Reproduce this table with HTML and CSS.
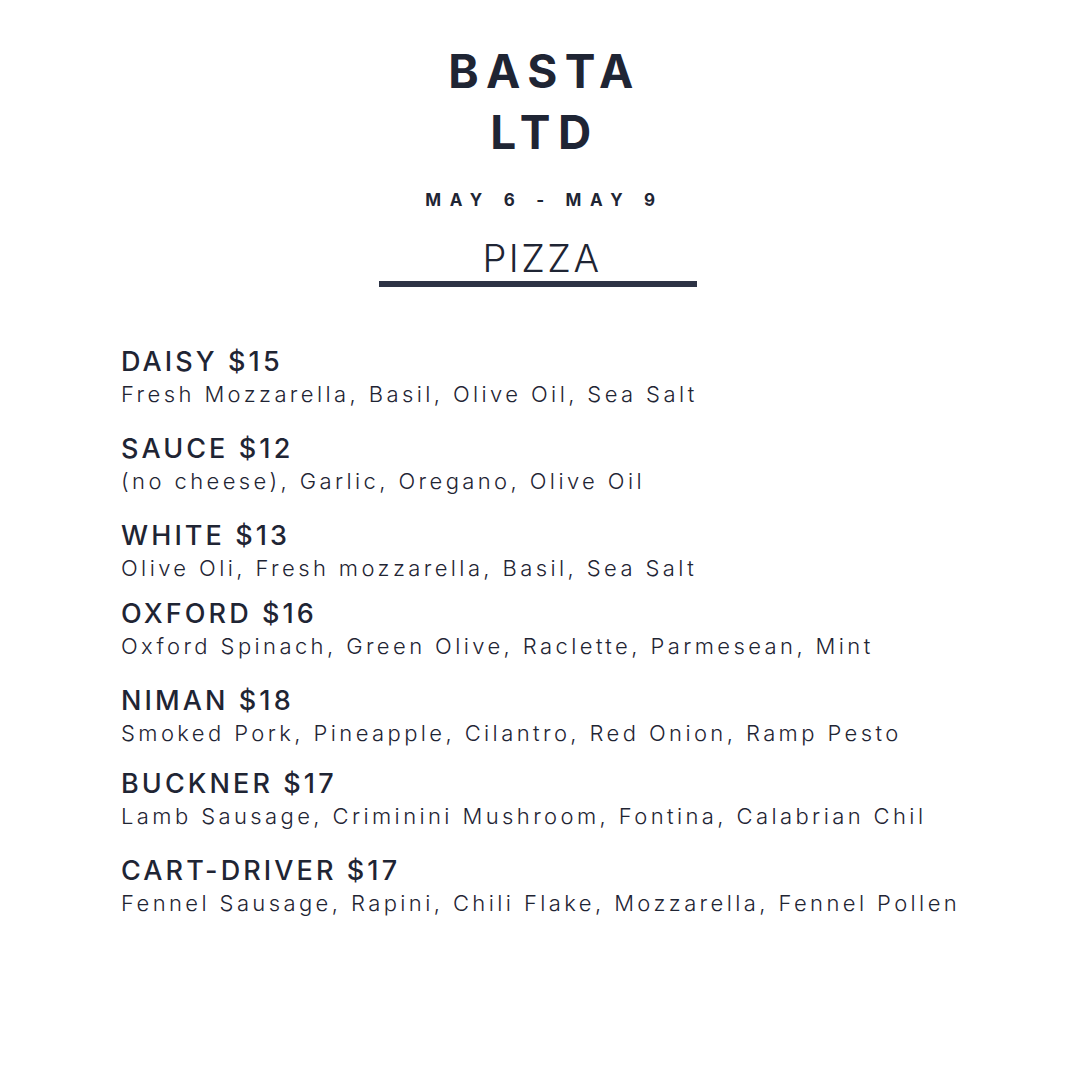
FILE: index.html
```html
<!DOCTYPE html>
<html>
<head>
<meta charset="utf-8">
<link rel="stylesheet" href="styles.css">
</head>
<body>
<div class="page">
  <header class="head">
    <h1 class="title"><span>BASTA</span><span>LTD</span></h1>
    <div class="dates">MAY 6 - MAY 9</div>
    <h2 class="section">PIZZA</h2>
    <div class="rule"></div>
  </header>
  <ul class="menu">
    <li class="item"><div class="name">DAISY $15</div><div class="desc">Fresh Mozzarella, Basil, Olive Oil, Sea Salt</div></li>
    <li class="item"><div class="name">SAUCE $12</div><div class="desc">(no cheese), Garlic, Oregano, Olive Oil</div></li>
    <li class="item"><div class="name">WHITE $13</div><div class="desc">Olive Oli, Fresh mozzarella, Basil, Sea Salt</div></li>
    <li class="item item--tight"><div class="name">OXFORD $16</div><div class="desc">Oxford Spinach, Green Olive, Raclette, Parmesean, Mint</div></li>
    <li class="item"><div class="name">NIMAN $18</div><div class="desc">Smoked Pork, Pineapple, Cilantro, Red Onion, Ramp Pesto</div></li>
    <li class="item item--snug"><div class="name">BUCKNER $17</div><div class="desc">Lamb Sausage, Criminini Mushroom, Fontina, Calabrian Chil</div></li>
    <li class="item"><div class="name">CART-DRIVER $17</div><div class="desc">Fennel Sausage, Rapini, Chili Flake, Mozzarella, Fennel Pollen</div></li>
  </ul>
</div>
</body>
</html>
```
FILE: styles.css
```css
* { box-sizing: border-box; }
html, body { margin: 0; padding: 0; background: #ffffff; }
body { font-family: "Inter", "Noto Sans", sans-serif; color: #1f2534; }
.page { width: 1080px; height: 1080px; display: flex; flex-direction: column; }
.head { display: flex; flex-direction: column; align-items: center; padding-top: 41px; }
.title { margin: 0; display: flex; flex-direction: column; align-items: center; font-size: 46px; font-weight: 700; line-height: 61px; letter-spacing: 7.5px; padding-left: 9px; }
.dates { margin-top: 27px; font-size: 17px; font-weight: 700; line-height: 20px; letter-spacing: 8.7px; padding-left: 9px; }
.section { margin: 28px 0 0; font-size: 38px; font-weight: 300; line-height: 40px; letter-spacing: 2.5px; padding-left: 4px; }
.rule { margin: 3px 4px 0 0; width: 318px; height: 6px; background: #2d3345; }
.menu { list-style: none; margin: 59px 0 0; padding: 0 0 0 121px; display: flex; flex-direction: column; }
.item { margin-bottom: 23px; }
.item--tight { margin-top: -9px; }
.item--snug { margin-top: -4px; }
.name { font-size: 27px; font-weight: 500; line-height: 32px; letter-spacing: 3.1px; }
.desc { font-size: 22px; font-weight: 300; line-height: 32px; letter-spacing: 3.4px; }
```
